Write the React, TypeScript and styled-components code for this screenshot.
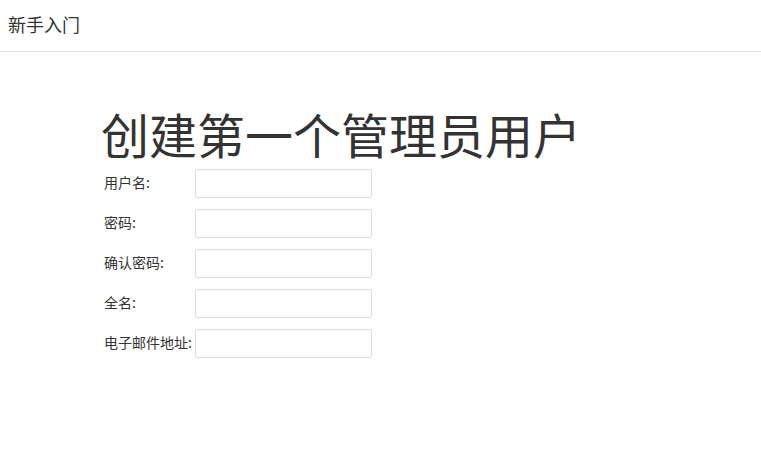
import React from "react";
import styled, { createGlobalStyle } from "styled-components";

const GlobalStyle = createGlobalStyle`
  html, body {
    margin: 0;
    padding: 0;
    background: #fff;
  }
  body {
    font-family: "Noto Sans CJK SC", "Liberation Sans", sans-serif;
    color: #333;
  }
`;

const Header = styled.div`
  box-sizing: border-box;
  height: 52px;
  border-bottom: 1px solid #e5e5e5;
  padding: 10px 8px 0;
  font-size: 18px;
  line-height: 28px;
  color: #333;
`;

const Content = styled.div`
  padding: 53px 0 0 104px;
`;

const Title = styled.h1`
  margin: 0 0 8px -3px;
  font-size: 48px;
  font-weight: 400;
  line-height: 56px;
  color: #333;
  white-space: nowrap;
`;

const Form = styled.form`
  display: flex;
  flex-direction: column;
  gap: 11px;
`;

const Row = styled.div`
  display: flex;
  align-items: center;
`;

const Label = styled.label`
  width: 91px;
  font-size: 14px;
  line-height: 18px;
  color: #333;
  margin-top: -4px;
  white-space: nowrap;
`;

const Input = styled.input`
  width: 177px;
  height: 29px;
  box-sizing: border-box;
  border: 1px solid #dcdcdc;
  border-radius: 2px;
  padding: 4px 6px;
  font-size: 13px;
  outline: none;
`;

const fields = [
  { label: "用户名:", type: "text" },
  { label: "密码:", type: "password" },
  { label: "确认密码:", type: "password" },
  { label: "全名:", type: "text" },
  { label: "电子邮件地址:", type: "email" },
];

export default function App() {
  return (
    <>
      <GlobalStyle />
      <Header>新手入门</Header>
      <Content>
        <Title>创建第一个管理员用户</Title>
        <Form>
          {fields.map((f) => (
            <Row key={f.label}>
              <Label>{f.label}</Label>
              <Input type={f.type} />
            </Row>
          ))}
        </Form>
      </Content>
    </>
  );
}
